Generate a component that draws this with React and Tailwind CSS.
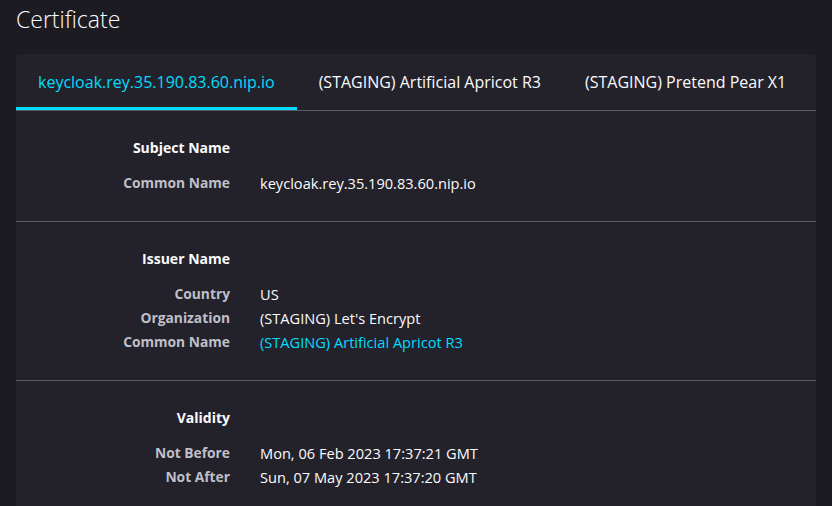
import React from 'react';

const tabs = [
  'keycloak.rey.35.190.83.60.nip.io',
  '(STAGING) Artificial Apricot R3',
  '(STAGING) Pretend Pear X1',
];

const sections = [
  {
    title: 'Subject Name',
    rows: [['Common Name', 'keycloak.rey.35.190.83.60.nip.io']],
  },
  {
    title: 'Issuer Name',
    rows: [
      ['Country', 'US'],
      ['Organization', "(STAGING) Let's Encrypt"],
      ['Common Name', '(STAGING) Artificial Apricot R3', true],
    ],
  },
  {
    title: 'Validity',
    rows: [
      ['Not Before', 'Mon, 06 Feb 2023 17:37:21 GMT'],
      ['Not After', 'Sun, 07 May 2023 17:37:20 GMT'],
    ],
  },
];

function Section({ title, rows, last }) {
  return (
    <div className={`pt-[25px] pb-[26px] ${last ? '' : 'border-b border-[#5b5b66]'}`}>
      <div className="grid grid-cols-[214px_1fr] gap-x-[30px]">
        <div className="text-right text-[14px] font-bold leading-6 text-[#fbfbfe]">{title}</div>
        <div />
      </div>
      <div className="mt-[11px] grid grid-cols-[214px_1fr] gap-x-[30px]">
        {rows.map(([label, value, link]) => (
          <React.Fragment key={label + value}>
            <div className="text-right text-[13.8px] font-bold leading-6 text-[#bfbfc9]">{label}</div>
            <div className={`text-[14.6px] leading-6 ${link ? 'text-[#00ddff]' : 'text-[#fbfbfe]'}`}>{value}</div>
          </React.Fragment>
        ))}
      </div>
    </div>
  );
}

export default function App() {
  return (
    <div className="min-h-screen bg-[#1c1b22] px-4 font-['Open_Sans',sans-serif]">
      <h1 className="pt-[3px] text-[23px] font-light leading-8 text-[#fbfbfe]">Certificate</h1>
      <div className="mt-[19px] rounded-t bg-[#23222b]">
        <div className="flex border-b border-[#5b5b66]">
          {tabs.map((t, i) => (
            <div
              key={t}
              className={`flex h-[56px] items-center border-b-[3px] px-[22px] pt-[3px] text-[16px] ${
                i === 0 ? 'border-[#00ddff] text-[#00ddff]' : 'border-transparent text-[#fbfbfe]'
              }`}
            >
              {t}
            </div>
          ))}
        </div>
        {sections.map((s, i) => (
          <Section key={s.title} {...s} last={i === sections.length - 1} />
        ))}
      </div>
    </div>
  );
}
